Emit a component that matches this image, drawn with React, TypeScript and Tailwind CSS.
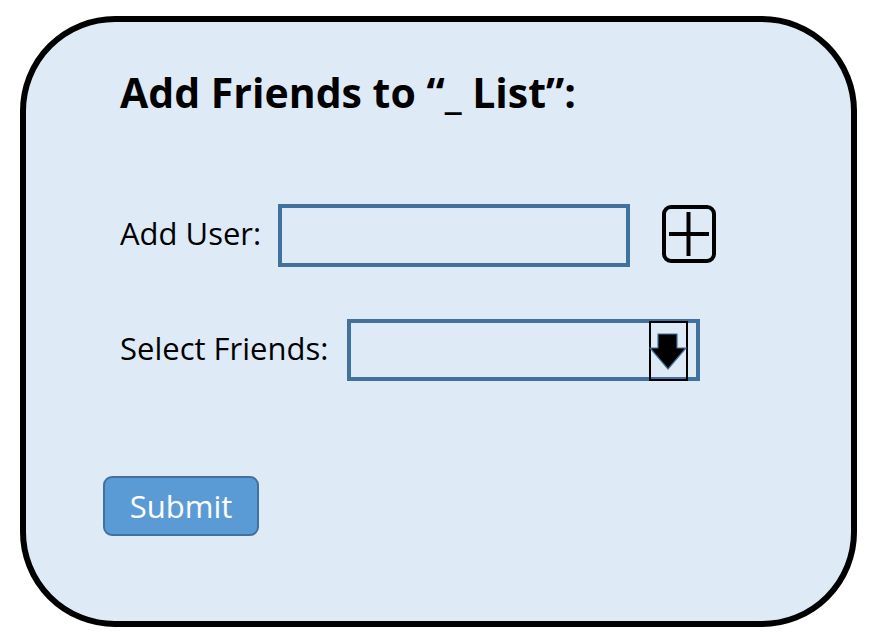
import React from "react";

export default function App() {
  return (
    <div
      className="w-[877px] h-[643px] bg-white pt-[16px] pl-[20px]"
      style={{ fontFamily: "'Open Sans', 'Noto Sans', sans-serif" }}
    >
      <div className="w-[837px] h-[611px] border-[6px] border-black rounded-[95px] bg-[#deebf7] pl-[94px] pt-[46px] flex flex-col">
        <h1 className="text-[41px] leading-[48px] font-bold text-black whitespace-nowrap">
          Add Friends to “_ List”:
        </h1>
        <div className="flex items-start mt-[88px]">
          <span className="w-[158px] mt-[9px] text-[31px] leading-[40px] text-black whitespace-nowrap">
            Add User:
          </span>
          <div className="w-[352px] h-[63px] border-[4px] border-[#41719c]" />
          <div className="ml-[32px] mt-[1px] w-[54px] h-[58px] border-[4px] border-black rounded-[9px]">
            <svg width="46" height="50" viewBox="0 0 46 50" className="block">
              <rect x="3" y="23" width="40" height="4" fill="#000" />
              <rect x="20.5" y="3" width="4" height="44" fill="#000" />
            </svg>
          </div>
        </div>
        <div className="flex items-start mt-[52px]">
          <span className="w-[227px] mt-[9px] text-[31px] leading-[40px] text-black whitespace-nowrap">
            Select Friends:
          </span>
          <div className="relative w-[353px] h-[62px] border-[4px] border-[#41719c]">
            <div className="absolute right-[8px] top-[-2px] w-[39px] h-[60px] border-[2px] border-black">
              <svg width="39" height="60" viewBox="0 0 39 60" className="absolute left-[-2px] top-[-2px]">
                <polygon
                  points="9,13 28,13 28,27 37,27 19,48 1,27 9,27"
                  fill="#000"
                  stroke="#41719c"
                  strokeWidth="1.2"
                />
              </svg>
            </div>
          </div>
        </div>
        <div className="mt-[95px] -ml-[17px]">
          <button className="w-[156px] h-[60px] bg-[#5b9bd5] border-[2px] border-[#41719c] rounded-[9px] text-white text-[31px] leading-none">
            Submit
          </button>
        </div>
      </div>
    </div>
  );
}
